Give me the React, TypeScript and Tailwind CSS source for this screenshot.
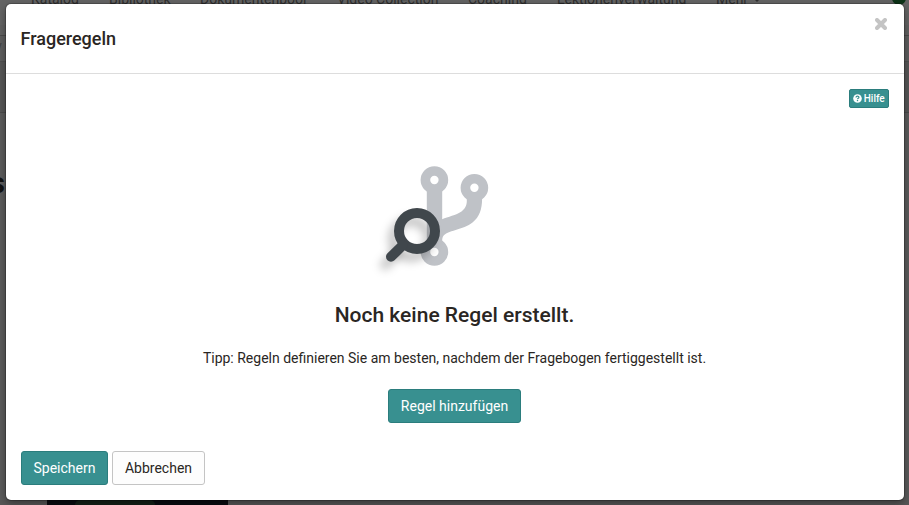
import React from 'react';

const navItems = [
  { label: 'Katalog', width: 'w-[78px]' },
  { label: 'Bibliothek', width: 'w-[91px]' },
  { label: 'Dokumentenpool', width: 'w-[137px]' },
  { label: 'Video Collection', width: 'w-[131px]' },
  { label: 'Coaching', width: 'w-[89px]' },
  { label: 'Lektionenverwaltung', width: 'w-[159px]' },
  { label: 'Mehr', width: 'w-[38px]' },
];

function PageBehind() {
  return (
    <div className="flex h-[505px] flex-col bg-[#575757]">
      <div className="flex h-[25px] shrink-0 items-start overflow-hidden bg-[#646464] pl-[31px] text-[14px] leading-[20px] text-[#303030]">
        {navItems.map((item) => (
          <span key={item.label} className={`${item.width} -mt-[11px] shrink-0 whitespace-nowrap`}>
            {item.label}
          </span>
        ))}
        <span className="-mt-[1px] h-0 w-0 border-x-[3px] border-t-[3px] border-x-transparent border-t-[#303030]" />
        <span className="-mt-[11px] ml-[132px] h-[16px] w-[14px] shrink-0 rounded-full bg-[#0d3217]" />
      </div>
      <div className="h-[11px] shrink-0 border-b border-[#4b4b4b] bg-[#616161]" />
      <div className="h-[26px] shrink-0 border-b border-[#505050] bg-[#5e5e5e] pt-[2px] text-[12px] leading-[16px] text-[#404040]">
        <span className="-ml-[4px]">y</span>
      </div>
      <div className="h-[51px] shrink-0 border-b border-[#4b4b4b] bg-[#575757]" />
      <div className="h-[387px] shrink-0 overflow-hidden bg-[#5c5c5c]">
        <div className="-ml-[10px] pt-[53px] text-[29px] leading-[34px] font-bold text-[#111111]">s</div>
      </div>
      <div className="ml-[47px] flex h-[5px] w-[181px] shrink-0 bg-[#090b10] pl-[28px]">
        <span className="h-[5px] w-[80px] rounded-t-full bg-[#142018]" />
      </div>
    </div>
  );
}

function EmptyIllustration() {
  return (
    <svg className="h-[135px] w-[140px]" viewBox="365 150 140 135" fill="none" aria-hidden="true">
      <defs>
        <filter id="soft" x="-50%" y="-50%" width="200%" height="200%">
          <feGaussianBlur stdDeviation="4" />
        </filter>
      </defs>
      <g stroke="#bfc2c7">
        <circle cx="434.4" cy="180" r="9" strokeWidth="9.6" />
        <circle cx="474.4" cy="187.8" r="9" strokeWidth="9.6" />
        <circle cx="434.4" cy="252" r="9" strokeWidth="9.6" />
      </g>
      <path
        fill="#bfc2c7"
        d="M426.8 190H442.2V219.2C448 216.4 456 215.4 461.5 211.4C466.2 208 467 204.2 466.8 199H482.1C482 209 479.5 217 472.5 222.5C463.5 229.7 446.5 230.5 443 236.5C442.2 238 442.1 239.5 442.2 242H426.8Z"
      />
      <g stroke="#000000" strokeOpacity="0.22" filter="url(#soft)">
        <circle cx="411" cy="239" r="18" strokeWidth="10" />
        <path d="M397 253L385 265" strokeWidth="10" strokeLinecap="round" />
      </g>
      <circle cx="417" cy="231" r="18" stroke="#40474c" strokeWidth="10" />
      <path d="M402.5 245.5L391 256.8" stroke="#40474c" strokeWidth="10" strokeLinecap="round" />
    </svg>
  );
}

function HelpIcon() {
  return (
    <svg className="h-[9px] w-[9px]" viewBox="0 0 9 9" fill="none" aria-hidden="true">
      <circle cx="4.5" cy="4.5" r="4.3" fill="white" />
      <path d="M3 3.5C3.1 1.8 5.9 1.8 5.9 3.4C5.9 4.4 4.5 4.2 4.5 5.3" stroke="#389090" strokeWidth="1.2" />
      <path d="M4.5 6V7.2" stroke="#389090" strokeWidth="1.3" />
    </svg>
  );
}

export default function App() {
  return (
    <div className="relative h-[505px] w-[909px] overflow-hidden font-['Roboto',sans-serif] text-[#2a2623]">
      <PageBehind />
      <div className="absolute top-[4px] left-[6px] flex h-[496px] w-[898px] flex-col rounded-[5px] bg-white shadow-[0_3px_9px_rgba(0,0,0,0.4),0_0_0_1px_rgba(0,0,0,0.2)]">
        <header className="flex h-[70px] shrink-0 items-start justify-between border-b border-[#dddddd] pr-[17px] pl-[15px]">
          <h1 className="-ml-[0.5px] pt-[23px] text-[18px] leading-[24px] font-medium">Frageregeln</h1>
          <button aria-label="Schließen" className="mt-[14px]">
            <svg className="h-[12px] w-[12px]" viewBox="0 0 12 12" aria-hidden="true">
              <path d="M2 2L10 10M10 2L2 10" stroke="#c4c4c4" strokeWidth="4" strokeLinecap="round" />
            </svg>
          </button>
        </header>
        <main className="flex flex-1 flex-col px-[15px] pt-[15px]">
          <button className="flex h-[19px] w-[40px] shrink-0 items-center justify-center gap-[1.5px] self-end rounded-[2px] border border-[#2b7d7d] bg-[#389090] text-[10px] leading-[15px] font-medium text-white">
            <HelpIcon />
            <span>Hilfe</span>
          </button>
          <section className="mt-[42px] mr-[1px] flex flex-col items-center">
            <div className="-ml-[40px]">
              <EmptyIllustration />
            </div>
            <h2 className="mt-[16px] text-[21px] leading-[28px] font-medium">Noch keine Regel erstellt.</h2>
            <p className="mt-[19px] text-[14px] leading-[20px]">
              Tipp: Regeln definieren Sie am besten, nachdem der Fragebogen fertiggestellt ist.
            </p>
            <button className="mt-[21px] h-[34px] w-[133px] rounded-[3px] border border-[#2b7d7d] bg-[#389090] text-[14px] leading-[20px] text-white">
              Regel hinzufügen
            </button>
          </section>
          <footer className="mt-[28px] flex gap-[4px] text-[14px] leading-[20px]">
            <button className="h-[34px] w-[87px] rounded-[3px] border border-[#2b7d7d] bg-[#389090] text-white">
              Speichern
            </button>
            <button className="h-[34px] w-[93px] rounded-[3px] border border-[#c4c4c4] bg-[#fdfdfd]">Abbrechen</button>
          </footer>
        </main>
      </div>
    </div>
  );
}
